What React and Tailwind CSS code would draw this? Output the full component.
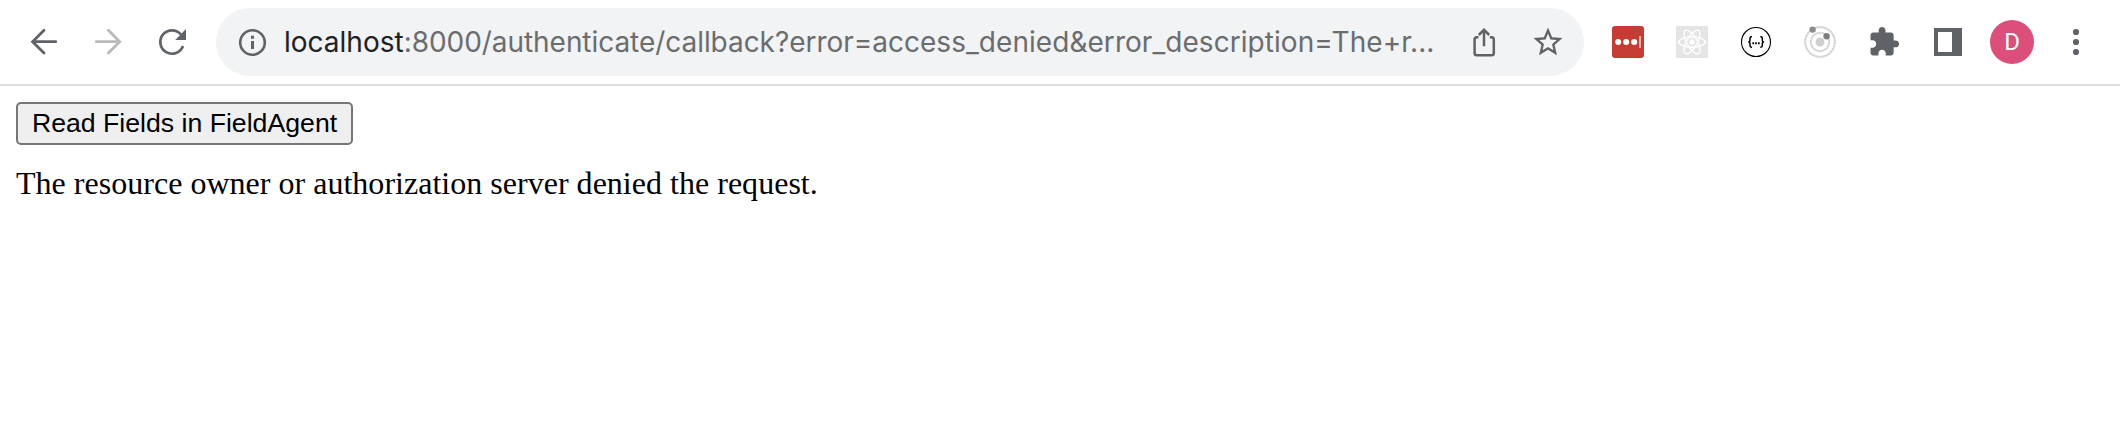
import React from "react";

const Icon = ({ children, className = "" }) => (
  <svg viewBox="0 0 32 32" fill="none" className={"size-8 shrink-0 " + className}>
    {children}
  </svg>
);

const BackIcon = () => (
  <Icon className="text-[#5f6368]">
    <path d="M27.7 15.7H5M16 4.2 4.6 15.7 16 27" stroke="currentColor" strokeWidth="2.8" strokeLinecap="round" />
  </Icon>
);

const ForwardIcon = () => (
  <Icon className="text-[#bababa]">
    <path d="M4.3 15.7H27M16.4 4.2 27.7 15.7 16.4 27" stroke="currentColor" strokeWidth="2.8" strokeLinecap="round" />
  </Icon>
);

const ReloadIcon = () => (
  <Icon className="text-[#5f6368]">
    <path d="M27 20A11.7 11.7 0 1 1 25 8.5" stroke="currentColor" strokeWidth="2.7" />
    <path d="M30 3V14H19.2Z" fill="currentColor" />
  </Icon>
);

const InfoIcon = () => (
  <Icon className="text-[#5f6368]">
    <circle cx="16.5" cy="16.5" r="12.3" stroke="currentColor" strokeWidth="2.6" />
    <path d="M15 9.7h3v3h-3zM15 15h3v8h-3z" fill="currentColor" />
  </Icon>
);

const ShareIcon = () => (
  <Icon className="text-[#5f6368]">
    <path d="M10.5 11.3H8.9Q6.6 11.3 6.6 13.6V27Q6.6 29.3 8.9 29.3H23.5Q25.8 29.3 25.8 27V13.6Q25.8 11.3 23.5 11.3H21.8M16 20.3V4M10.8 9 16 3.8 21.2 9" stroke="currentColor" strokeWidth="2.5" />
  </Icon>
);

const StarIcon = () => (
  <Icon className="text-[#5f6368]">
    <path transform="translate(-1.4 -1.3) scale(1.45)" fill="currentColor" d="M22 9.24l-7.19-.62L12 2 9.19 8.63 2 9.24l5.46 4.73L5.82 21 12 17.27 18.18 21l-1.63-7.03L22 9.24zM12 15.4l-3.76 2.27 1-4.28-3.32-2.88 4.38-.38L12 6.1l1.71 4.04 4.38.38-3.32 2.88 1 4.28L12 15.4z" />
  </Icon>
);

const PasswordIcon = () => (
  <Icon>
    <rect width="32" height="32" rx="3" fill="#c43c32" />
    <g fill="#fff">
      <circle cx="6.2" cy="16" r="3" />
      <circle cx="14.2" cy="16" r="3" />
      <circle cx="22.2" cy="16" r="3" />
      <path d="M27.2 10h1.6v12h-1.6z" opacity=".75" />
    </g>
  </Icon>
);

const ReactIcon = () => (
  <Icon>
    <rect width="32" height="32" rx="1.5" fill="#e5e5e5" />
    <g stroke="#fff" strokeWidth="1.4">
      <ellipse cx="16" cy="16" rx="13.3" ry="5.2" />
      <ellipse cx="16" cy="16" rx="13.3" ry="5.2" transform="rotate(60 16 16)" />
      <ellipse cx="16" cy="16" rx="13.3" ry="5.2" transform="rotate(120 16 16)" />
    </g>
    <circle cx="16" cy="16" r="2.7" fill="#fff" />
  </Icon>
);

const BracesIcon = () => (
  <Icon className="text-black">
    <circle cx="16" cy="16" r="14.5" stroke="currentColor" strokeWidth="1.1" />
    <path d="M12 10.8H11.4Q10 10.8 10 12.2V14.4Q10 16 8.2 16 10 16 10 17.6V19.8Q10 21.2 11.4 21.2H12M20.3 10.8H20.9Q22.3 10.8 22.3 12.2V14.4Q22.3 16 24.1 16 22.3 16 22.3 17.6V19.8Q22.3 21.2 20.9 21.2H20.3" stroke="currentColor" strokeWidth="1.5" />
    <path d="M12.4 16.2h1.7v2h-1.7zM15.2 16.2h1.7v2h-1.7zM18 16.2h1.7v2h-1.7z" fill="currentColor" />
  </Icon>
);

const OrbitIcon = () => (
  <Icon>
    <circle cx="16" cy="16" r="14.8" stroke="#e2e2e2" strokeWidth="2.2" />
    <circle cx="16" cy="16" r="14.8" stroke="#d2d2d2" strokeWidth="1.6" strokeDasharray="2 1.2" />
    <circle cx="16" cy="16" r="9.2" stroke="#e0e0e0" strokeWidth="2" />
    <circle cx="16" cy="16" r="9.2" stroke="#d2d2d2" strokeWidth="1.5" strokeDasharray="2 1.2" />
    <circle cx="16" cy="16" r="4.5" fill="#cfcfcf" />
    <circle cx="8.6" cy="3.6" r="3.2" fill="#8c8c8c" />
    <circle cx="22.6" cy="10.2" r="3.2" fill="#7c7c7c" />
  </Icon>
);

const PuzzleIcon = () => (
  <Icon className="text-[#5f6368]">
    <path transform="translate(-.2 -.4) scale(1.36)" fill="currentColor" d="M20.5 11H19V7c0-1.1-.9-2-2-2h-4V3.5C13 2.12 11.88 1 10.5 1S8 2.12 8 3.5V5H4c-1.1 0-1.99.9-1.99 2v3.8H3.5c1.49 0 2.7 1.21 2.7 2.7s-1.21 2.7-2.7 2.7H2V20c0 1.1.9 2 2 2h3.8v-1.5c0-1.49 1.21-2.7 2.7-2.7 1.49 0 2.7 1.21 2.7 2.7V22H17c1.1 0 2-.9 2-2v-4h1.5c1.38 0 2.5-1.12 2.5-2.5S21.88 11 20.5 11z" />
  </Icon>
);

const SidePanelIcon = () => (
  <Icon className="text-[#5f6368]">
    <path fillRule="evenodd" fill="currentColor" d="M2 2H30V30H2ZM6 6V26H20V6Z" />
  </Icon>
);

const MenuIcon = () => (
  <Icon className="text-[#5f6368]">
    <g fill="currentColor">
      <circle cx="16" cy="6" r="3.1" />
      <circle cx="16" cy="16" r="3.1" />
      <circle cx="16" cy="26" r="3.1" />
    </g>
  </Icon>
);

const Toolbar = () => (
  <header className="flex h-[86px] items-center border-b-2 border-[#dcdcdc] pl-7">
    <nav className="flex gap-8">
      <BackIcon />
      <ForwardIcon />
      <ReloadIcon />
    </nav>
    <div className="ml-7 flex h-17 w-[1368px] shrink-0 items-center rounded-full bg-[#f1f3f4] px-5">
      <InfoIcon />
      <div className="ml-4 flex-1 whitespace-nowrap font-['Inter',sans-serif] text-[28px] leading-8 text-[#6b6c6e]">
        <span className="text-[#202124]">localhost</span>
        <span className="tracking-[-0.05px]">:8000/authenticate/callback?error=</span>
        <span className="tracking-[0.05px]">access_denied&amp;error_description=The+r...</span>
      </div>
      <div className="flex gap-8">
        <ShareIcon />
        <StarIcon />
      </div>
    </div>
    <div className="ml-7 flex items-center gap-8">
      <PasswordIcon />
      <ReactIcon />
      <BracesIcon />
      <OrbitIcon />
      <PuzzleIcon />
      <SidePanelIcon />
    </div>
    <div className="ml-[26px] flex size-11 items-center justify-center rounded-full bg-[#db4f7a] font-['Roboto',sans-serif] text-2xl text-white">
      D
    </div>
    <div className="ml-[26px]">
      <MenuIcon />
    </div>
  </header>
);

export default function App() {
  return (
    <div className="h-[444px] w-[2120px] overflow-hidden bg-white">
      <Toolbar />
      <main className="flex flex-col items-start px-4 pt-4">
        <button className="h-[43px] w-[337px] rounded-[5px] border-2 border-[#767676] bg-[#efefef] pb-px font-['Liberation_Sans',Arial,sans-serif] text-[26.67px] leading-[38px] whitespace-nowrap text-black">
          Read Fields in FieldAgent
        </button>
        <p className="mt-5 font-['Liberation_Serif',serif] text-[32px] leading-9 tracking-[0.02px] text-black">
          The resource owner or authorization server denied the request.
        </p>
      </main>
    </div>
  );
}
